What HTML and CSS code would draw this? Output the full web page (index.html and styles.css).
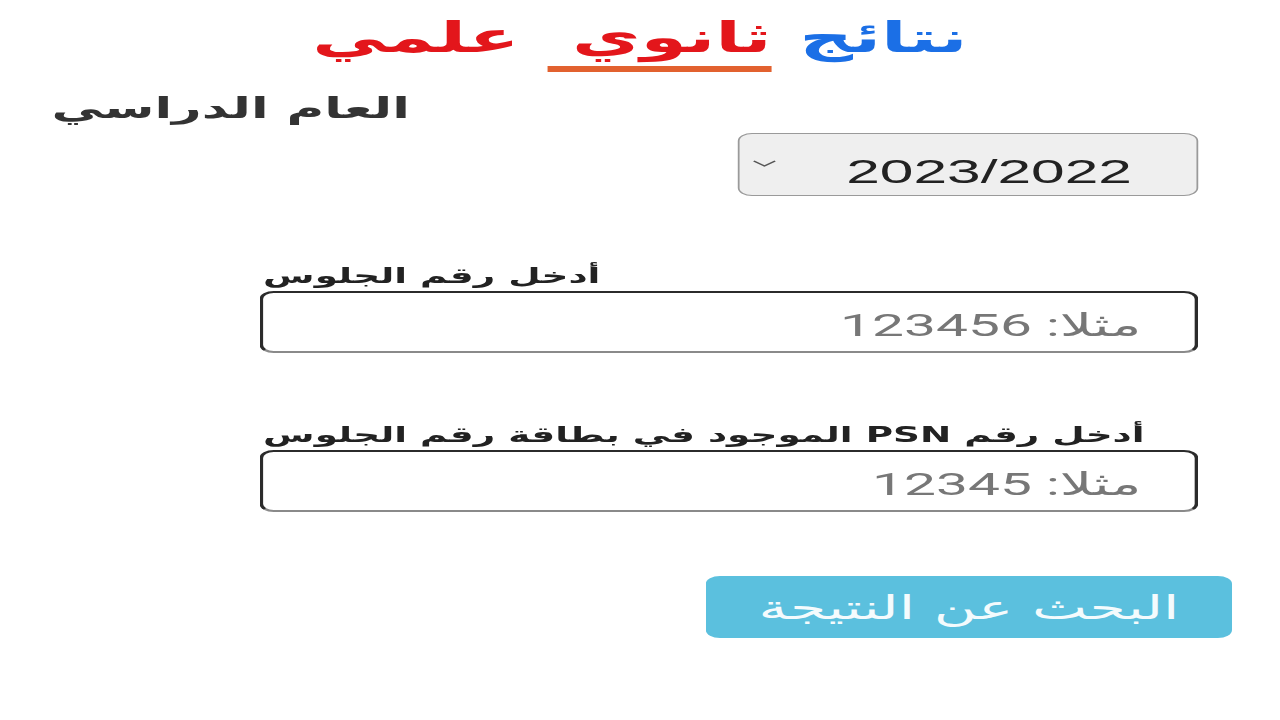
FILE: index.html
```html
<!DOCTYPE html>
<html lang="ar">
<head>
<meta charset="utf-8">
<title>نتائج ثانوي علمي</title>
<link rel="stylesheet" href="styles.css">
</head>
<body>
<div class="stage">
  <main class="page">
    <h1 class="title" dir="rtl"><span class="blue">نتائج</span> <span class="red mark">ثانوي</span> <span class="red">علمي</span></h1>
    <div class="year-label" dir="rtl">العام الدراسي</div>
    <div class="select-row">
      <div class="select-box">
        <svg class="chev" viewBox="0 0 14 8" width="14" height="8"><path d="M1 1 L7 6 L13 1" fill="none" stroke="#555" stroke-width="1.2"/></svg>
        <select class="select" dir="ltr"><option>2023/2022</option></select>
      </div>
    </div>
    <div class="field field-1">
      <label class="label" dir="rtl">أدخل رقم الجلوس</label>
      <input class="input" dir="rtl" type="text" placeholder="مثلا: 123456">
    </div>
    <div class="field field-2">
      <label class="label" dir="rtl">أدخل رقم PSN الموجود في بطاقة رقم الجلوس</label>
      <input class="input" dir="rtl" type="text" placeholder="مثلا: 12345">
    </div>
    <div class="btn-row">
      <button class="btn" dir="rtl">البحث عن النتيجة</button>
    </div>
  </main>
</div>
</body>
</html>
```
FILE: styles.css
```css
html, body {
  margin: 0;
  padding: 0;
  background: #ffffff;
  overflow: hidden;
}
.stage {
  width: 1280px;
  height: 720px;
  overflow: hidden;
}
.page {
  width: 720px;
  transform: scaleX(1.7778);
  transform-origin: 0 0;
  font-family: Roboto, "DejaVu Sans", sans-serif;
  color: #333;
}
.title {
  margin: 0;
  padding-top: 16px;
  height: 56px;
  text-align: center;
  font-family: "DejaVu Sans", sans-serif;
  font-weight: bold;
  font-size: 42px;
  line-height: 44px;
  word-spacing: 1px;
}
.blue { color: #1b6fe6; }
.red { color: #e3161b; }
.mark {
  display: inline-block;
  border-bottom: 6px solid #e2612f;
  line-height: 44px;
  padding: 0 0 6px 14px;
}
.year-label {
  margin-top: 18px;
  padding-left: 29px;
  text-align: left;
  font-family: "DejaVu Sans", sans-serif;
  font-weight: bold;
  font-size: 29px;
  line-height: 36px;
  color: #333;
}
.select-row {
  display: flex;
  justify-content: flex-start;
  padding-left: 415px;
  margin-top: 7px;
}
.select-box {
  position: relative;
  width: 259px;
  height: 63px;
  box-sizing: border-box;
  border: 1px solid #9a9a9a;
  border-radius: 8px;
  background: #efefef;
}
.chev {
  position: absolute;
  left: 7px;
  top: 26px;
}
.select {
  appearance: none;
  -webkit-appearance: none;
  width: 100%;
  height: 100%;
  border: none;
  background: transparent;
  font-family: "Liberation Sans", Roboto, sans-serif;
  font-size: 34px;
  color: #222;
  padding: 12px 0 0 60px;
  outline: none;
}
.field {
  padding-left: 146px;
  width: 528px;
}
.field-1 { margin-top: 65px; }
.field-2 { margin-top: 67px; }
.label {
  display: block;
  text-align: left;
  padding-left: 2px;
  font-family: "DejaVu Sans", sans-serif;
  font-weight: bold;
  font-size: 21px;
  line-height: 30px;
  color: #222;
}
.input {
  display: block;
  width: 528px;
  height: 62px;
  box-sizing: border-box;
  border: 2px solid #2b2b2b;
  border-bottom-color: #8a8a8a;
  border-radius: 8px;
  background: #fff;
  padding: 6px 30px 0 12px;
  font-family: Roboto, "DejaVu Sans", sans-serif;
  font-size: 32px;
  color: #333;
  outline: none;
}
.input::placeholder {
  color: #777;
}
.btn-row {
  padding-left: 397px;
  margin-top: 64px;
}
.btn {
  width: 296px;
  height: 62px;
  border: none;
  border-radius: 8px;
  background: #5bc0de;
  color: #f4fbfd;
  font-family: "DejaVu Sans", sans-serif;
  font-size: 33px;
  padding: 0;
  cursor: pointer;
}
```
